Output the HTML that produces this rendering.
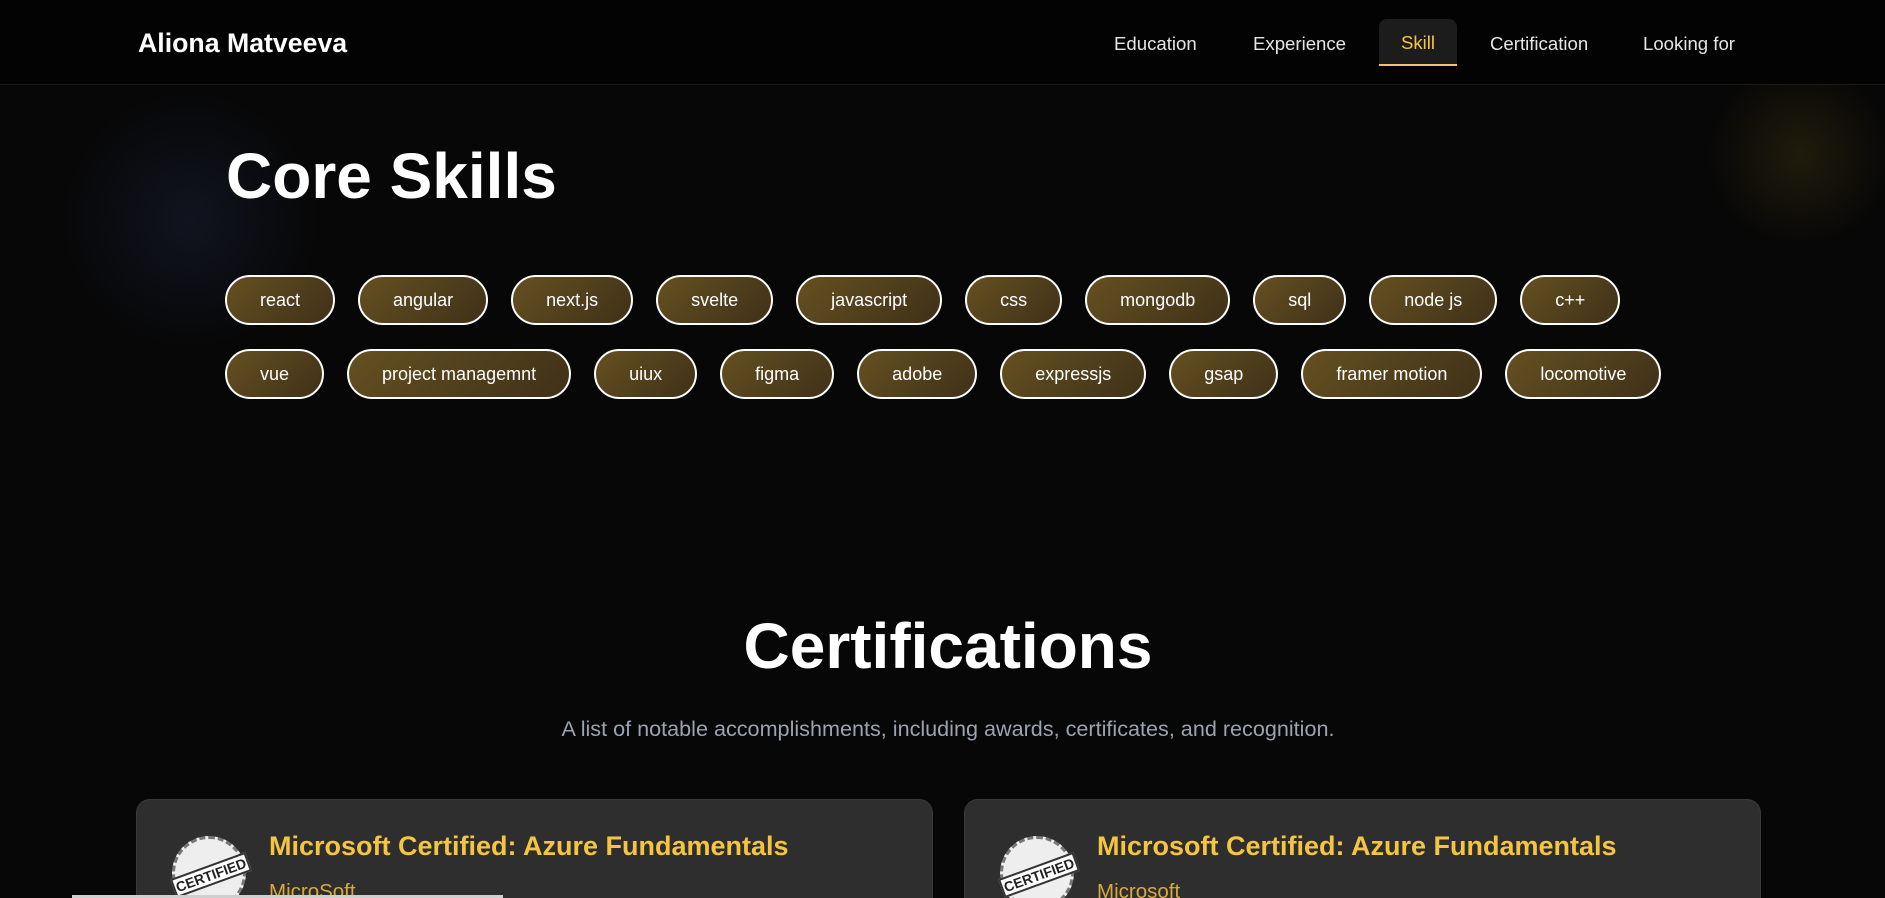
<!DOCTYPE html>
<html><head><meta charset="utf-8"><style>
*{margin:0;padding:0;box-sizing:border-box}
html,body{width:1885px;height:898px;overflow:hidden;background:#070707;font-family:"Liberation Sans",Arial,sans-serif;color:#fff}
body{position:relative}
.glow1{position:absolute;left:60px;top:90px;width:260px;height:260px;border-radius:50%;background:radial-gradient(circle,rgba(40,50,90,.3),rgba(40,50,90,0) 70%)}
.glow2{position:absolute;left:1700px;top:70px;width:200px;height:170px;border-radius:50%;background:radial-gradient(circle,rgba(90,75,20,.3),rgba(90,75,20,0) 70%)}
nav{position:absolute;left:0;top:0;width:1885px;height:85px;background:#030303;border-bottom:1px solid #1a1a1a}
.logo{position:absolute;left:138px;top:28px;font-size:26.7px;font-weight:bold}
.ni{position:absolute;top:33px;font-size:18.6px;color:#e5e5e5}
.skill{position:absolute;left:1379px;top:19px;width:78px;height:47px;background:#1c1c1c;border-radius:8px 8px 0 0;border-bottom:2px solid #f0c27a;color:#f5c542;font-size:18.6px;text-align:center;line-height:47px}
h1{position:absolute;left:226px;top:139px;font-size:64px;font-weight:bold}
.row{position:absolute;left:225px;display:flex;gap:23px}
.chip{height:50px;border:2px solid #fff;border-radius:25px;padding:0 33px;line-height:46px;font-size:18px;background:linear-gradient(135deg,#655020,#3f3119)}
h2{position:absolute;left:0;width:1896px;text-align:center;top:609px;font-size:64px;font-weight:bold}
.sub{position:absolute;left:0;width:1896px;text-align:center;top:716px;font-size:21.6px;color:#9aa3b0}
.card{position:absolute;top:799px;width:797px;height:120px;background:#2e2e2e;border-radius:14px;border:1px solid #3a3a3a}
.badge{position:absolute;left:35px;top:36px;width:74px;height:74px;border-radius:50%;background:#eee;border:3px dashed #777}
.badge span{position:absolute;left:-4px;top:26px;width:80px;background:#fff;color:#222;font-size:14px;font-weight:bold;text-align:center;transform:rotate(-20deg);border:2px solid #333}
.ct{position:absolute;left:132px;top:31px;font-size:27px;font-weight:bold;color:#f5c542}
.cs{position:absolute;left:132px;top:80px;font-size:20.5px;color:#d9a93a}
.bar{position:absolute;left:72px;top:895px;width:431px;height:3px;background:#cfcfcf}
</style></head><body>
<div class="glow1"></div><div class="glow2"></div>
<nav>
<div class="logo">Aliona Matveeva</div>
<div class="ni" style="left:1114px">Education</div>
<div class="ni" style="left:1253px">Experience</div>
<div class="skill">Skill</div>
<div class="ni" style="left:1490px">Certification</div>
<div class="ni" style="left:1643px">Looking for</div>
</nav>
<h1>Core Skills</h1>
<div class="row" style="top:275px"><div class="chip">react</div><div class="chip">angular</div><div class="chip">next.js</div><div class="chip">svelte</div><div class="chip">javascript</div><div class="chip">css</div><div class="chip">mongodb</div><div class="chip">sql</div><div class="chip">node js</div><div class="chip">c++</div></div>
<div class="row" style="top:349px"><div class="chip">vue</div><div class="chip">project managemnt</div><div class="chip">uiux</div><div class="chip">figma</div><div class="chip">adobe</div><div class="chip">expressjs</div><div class="chip">gsap</div><div class="chip">framer motion</div><div class="chip">locomotive</div></div>
<h2>Certifications</h2>
<div class="sub">A list of notable accomplishments, including awards, certificates, and recognition.</div>
<div class="card" style="left:136px"><div class="badge"><span>CERTIFIED</span></div><div class="ct">Microsoft Certified: Azure Fundamentals</div><div class="cs">MicroSoft</div></div>
<div class="card" style="left:964px"><div class="badge"><span>CERTIFIED</span></div><div class="ct">Microsoft Certified: Azure Fundamentals</div><div class="cs">Microsoft</div></div>
<div class="bar"></div>
</body></html>
